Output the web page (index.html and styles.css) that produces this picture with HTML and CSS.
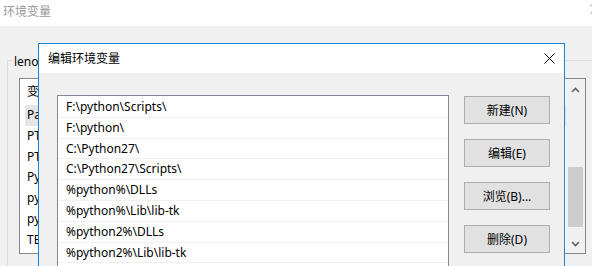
FILE: index.html
```html
<!DOCTYPE html>
<html>
<head>
<meta charset="utf-8">
<link rel="stylesheet" href="styles.css">
</head>
<body>
<div class="screen">
  <div class="bg-window">
    <div class="bg-title">
      <span class="bg-title-text">环境变量</span>
      <svg class="bg-close" width="10" height="10" viewBox="0 0 10 10"><path d="M0.5 0.5L9.5 9.5M9.5 0.5L0.5 9.5" stroke="#9a9a9a" stroke-width="1"/></svg>
    </div>
    <div class="bg-body">
      <div class="group">
        <div class="group-head"><span class="group-line-short"></span><span class="group-label">lenovo 的用户变量(U)</span><span class="group-line-long"></span></div>
        <div class="group-inner">
          <div class="bg-list">
            <div class="bg-list-main">
              <div class="bg-header">变量</div>
              <div class="bg-row sel">Path</div>
              <div class="bg-row">PTGen</div>
              <div class="bg-row">PTGen2</div>
              <div class="bg-row">Python</div>
              <div class="bg-row">python</div>
              <div class="bg-row">python2</div>
              <div class="bg-row">TEMP</div>
            </div>
            <div class="bg-scroll">
              <svg class="arrow" width="9" height="6" viewBox="0 0 9 6"><path d="M1 5L4.5 1.5L8 5" fill="none" stroke="#606060" stroke-width="1.6"/></svg>
              <div class="track"><div class="thumb"></div></div>
              <svg class="arrow" width="9" height="6" viewBox="0 0 9 6"><path d="M1 1L4.5 4.5L8 1" fill="none" stroke="#606060" stroke-width="1.6"/></svg>
            </div>
          </div>
        </div>
      </div>
    </div>
  </div>

  <div class="dialog">
    <div class="dlg-title">
      <span class="dlg-title-text">编辑环境变量</span>
      <svg class="dlg-close" width="11" height="11" viewBox="0 0 11 11"><path d="M0.5 0.5L10.5 10.5M10.5 0.5L0.5 10.5" stroke="#000" stroke-width="1"/></svg>
    </div>
    <div class="dlg-body">
      <div class="path-list">
        <div class="path-row">F:\python\Scripts\</div>
        <div class="path-row">F:\python\</div>
        <div class="path-row">C:\Python27\</div>
        <div class="path-row">C:\Python27\Scripts\</div>
        <div class="path-row">%python%\DLLs</div>
        <div class="path-row">%python%\Lib\lib-tk</div>
        <div class="path-row">%python2%\DLLs</div>
        <div class="path-row">%python2%\Lib\lib-tk</div>
      </div>
      <div class="buttons">
        <button class="btn">新建(N)</button>
        <button class="btn">编辑(E)</button>
        <button class="btn">浏览(B)...</button>
        <button class="btn">删除(D)</button>
      </div>
    </div>
  </div>
</div>
</body>
</html>
```

FILE: styles.css
```css
* { box-sizing: border-box; }
html, body {
  margin: 0;
  padding: 0;
}
body {
  font-family: "Noto Sans", "Noto Sans CJK SC", sans-serif;
  font-size: 12px;
  color: #000;
  background: #f0f0f0;
}
.screen {
  position: relative;
  width: 592px;
  height: 266px;
  overflow: hidden;
  background: #f0f0f0;
}
.bg-window {
  width: 620px;
  height: 266px;
}
.bg-title {
  position: relative;
  height: 26px;
  background: #fff;
  display: flex;
  align-items: center;
  padding-left: 3px;
}
.bg-title-text {
  color: #9a9a9a;
  font-size: 12px;
  line-height: 16px;
  margin-top: -3px;
}
.bg-close {
  position: absolute;
  left: 590px;
  top: 4px;
}
.bg-body {
  padding: 34px 0 0 7px;
}
.group-head {
  display: flex;
  align-items: center;
  height: 1px;
}
.group-line-short {
  width: 6px;
  border-top: 1px solid #dcdcdc;
}
.group-label {
  width: 25px;
  overflow: hidden;
  padding-left: 1px;
  line-height: 16px;
  margin-top: 3px;
  white-space: nowrap;
}
.group-line-long {
  flex: 1;
  border-top: 1px solid #dcdcdc;
}
.group-inner {
  border-left: 1px solid #dcdcdc;
  height: 210px;
  padding: 17px 0 0 11px;
}
.bg-list {
  display: flex;
  width: 567px;
  height: 176px;
  border: 1px solid #828790;
  background: #fff;
}
.bg-list-main {
  flex: 1;
  padding-left: 5px;
}
.bg-header {
  height: 26px;
  line-height: 26px;
  padding-left: 2px;
}
.bg-row {
  height: 20.8px;
  line-height: 20px;
  padding-left: 2px;
}
.bg-row.sel {
  background: #e5e5e5;
}
.bg-scroll {
  width: 19px;
  background: #f0f0f0;
  display: flex;
  flex-direction: column;
  align-items: center;
  padding: 8px 0 6px;
}
.bg-scroll .arrow { flex: none; }
.track {
  flex: 1;
  width: 100%;
  position: relative;
  padding: 0 2px 0 2px;
}
.thumb {
  margin-top: 74px;
  height: 60px;
  background: #cdcdcd;
}

.dialog {
  position: absolute;
  left: 38px;
  top: 43px;
  width: 527px;
  height: 240px;
  border: 1px solid #1883d7;
  background: #f0f0f0;
}
.dlg-title {
  height: 29px;
  background: #fff;
  display: flex;
  align-items: center;
  justify-content: space-between;
  padding: 0 9px 0 9px;
}
.dlg-title-text {
  font-size: 12px;
  line-height: 16px;
}
.dlg-body {
  display: flex;
  padding: 22px 0 0 18px;
}
.path-list {
  width: 392px;
  height: 200px;
  border: 1px solid #828790;
  background: #fff;
  padding-top: 1px;
}
.path-row {
  height: 20.8px;
  line-height: 20px;
  padding-left: 8px;
  border-bottom: 1px solid #f0f0f0;
  white-space: nowrap;
}
.buttons {
  display: flex;
  flex-direction: column;
  gap: 15px;
  margin-left: 15px;
  padding-top: 1px;
}
.btn {
  width: 86px;
  height: 28px;
  border: 1px solid #adadad;
  background: #e1e1e1;
  font-family: inherit;
  font-size: 12px;
  color: #000;
  padding: 0;
}
```
